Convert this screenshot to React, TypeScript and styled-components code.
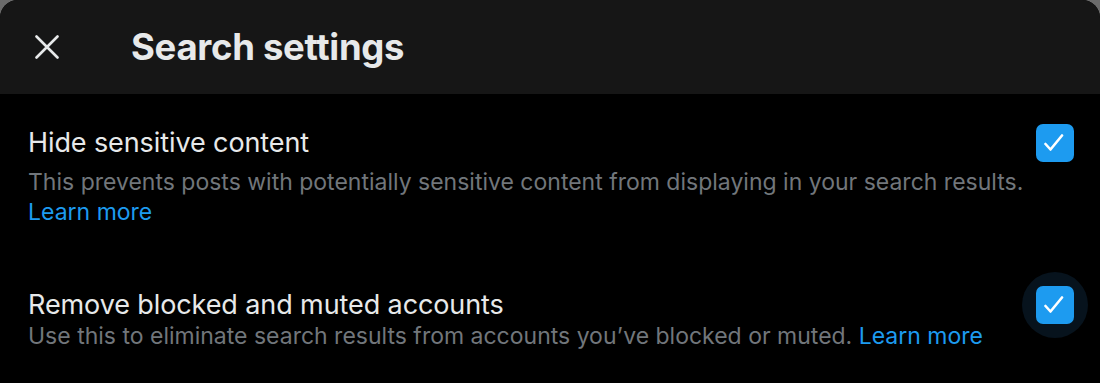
import React from "react";
import styled, { createGlobalStyle } from "styled-components";

const Global = createGlobalStyle`
  html, body { margin: 0; padding: 0; background: #6b6b6b; }
  body { font-family: Inter, "Noto Sans", sans-serif; -webkit-font-smoothing: antialiased; }
`;

const Panel = styled.div`
  width: 1100px;
  height: 383px;
  background: #000;
  border-radius: 18px 18px 0 0;
  overflow: hidden;
  display: flex;
  flex-direction: column;
`;

const Header = styled.header`
  height: 94px;
  flex: none;
  background: #161616;
  display: flex;
  align-items: center;
  padding-left: 35px;
  gap: 72px;
`;

const CloseButton = styled.button`
  width: 24px;
  height: 24px;
  padding: 0;
  border: 0;
  background: transparent;
  color: #e7e9ea;
  display: flex;
  align-items: center;
  justify-content: center;
  cursor: pointer;
`;

const Title = styled.h1`
  margin: 0;
  font-size: 36.5px;
  font-weight: 700;
  letter-spacing: -0.3px;
  color: #e7e9ea;
  line-height: 44px;
`;

const Content = styled.div`
  padding: 30px 26px 0 28px;
  display: flex;
  flex-direction: column;
  gap: 59px;
`;

const Setting = styled.section`
  display: flex;
  flex-direction: column;
`;

const LabelRow = styled.div`
  display: flex;
  align-items: center;
  justify-content: space-between;
  min-height: 38px;
`;

const Label = styled.span`
  font-size: 27px;
  line-height: 32px;
  color: #e7e9ea;
  letter-spacing: -0.1px;
`;

const Description = styled.p<{ $offset: number }>`
  margin: ${(p) => p.$offset}px 0 0 0;
  font-size: 23px;
  line-height: 30px;
  color: #71767b;
  letter-spacing: 0;
`;

const Link = styled.a`
  color: #1d9bf0;
  text-decoration: none;
`;

const CheckWrap = styled.div<{ $halo: boolean }>`
  position: relative;
  width: 38px;
  height: 38px;
  flex: none;
  &::before {
    content: "";
    display: ${(p) => (p.$halo ? "block" : "none")};
    position: absolute;
    left: -14px;
    top: -14px;
    width: 66px;
    height: 66px;
    border-radius: 50%;
    background: #07131d;
  }
`;

const CheckBox = styled.div`
  position: relative;
  width: 38px;
  height: 38px;
  border-radius: 7px;
  background: #1d9bf0;
  display: flex;
  align-items: center;
  justify-content: center;
`;

function Check({ halo }: { halo: boolean }) {
  return (
    <CheckWrap $halo={halo}>
      <CheckBox>
        <svg width="22" height="22" viewBox="0 0 22 22" fill="none">
          <path d="M1.5 12 L6.5 17.5 L18 3.5" stroke="#fff" strokeWidth="2.6" strokeLinecap="round" strokeLinejoin="round" />
        </svg>
      </CheckBox>
    </CheckWrap>
  );
}

export default function App() {
  return (
    <>
      <Global />
      <Panel>
        <Header>
          <CloseButton aria-label="Close">
            <svg width="24" height="24" viewBox="0 0 24 24" fill="none">
              <path d="M1.5 1.5 L22.5 22.5 M22.5 1.5 L1.5 22.5" stroke="#e7e9ea" strokeWidth="2.6" strokeLinecap="round" />
            </svg>
          </CloseButton>
          <Title>Search settings</Title>
        </Header>
        <Content>
          <Setting>
            <LabelRow>
              <Label>Hide sensitive content</Label>
              <Check halo={false} />
            </LabelRow>
            <Description $offset={5}>
              This prevents posts with potentially sensitive content from displaying in your search results.{" "}
              <Link href="#">Learn more</Link>
            </Description>
          </Setting>
          <Setting>
            <LabelRow>
              <Label>Remove blocked and muted accounts</Label>
              <Check halo={true} />
            </LabelRow>
            <Description $offset={-3}>
              Use this to eliminate search results from accounts you’ve blocked or muted.{" "}
              <Link href="#">Learn more</Link>
            </Description>
          </Setting>
        </Content>
      </Panel>
    </>
  );
}
